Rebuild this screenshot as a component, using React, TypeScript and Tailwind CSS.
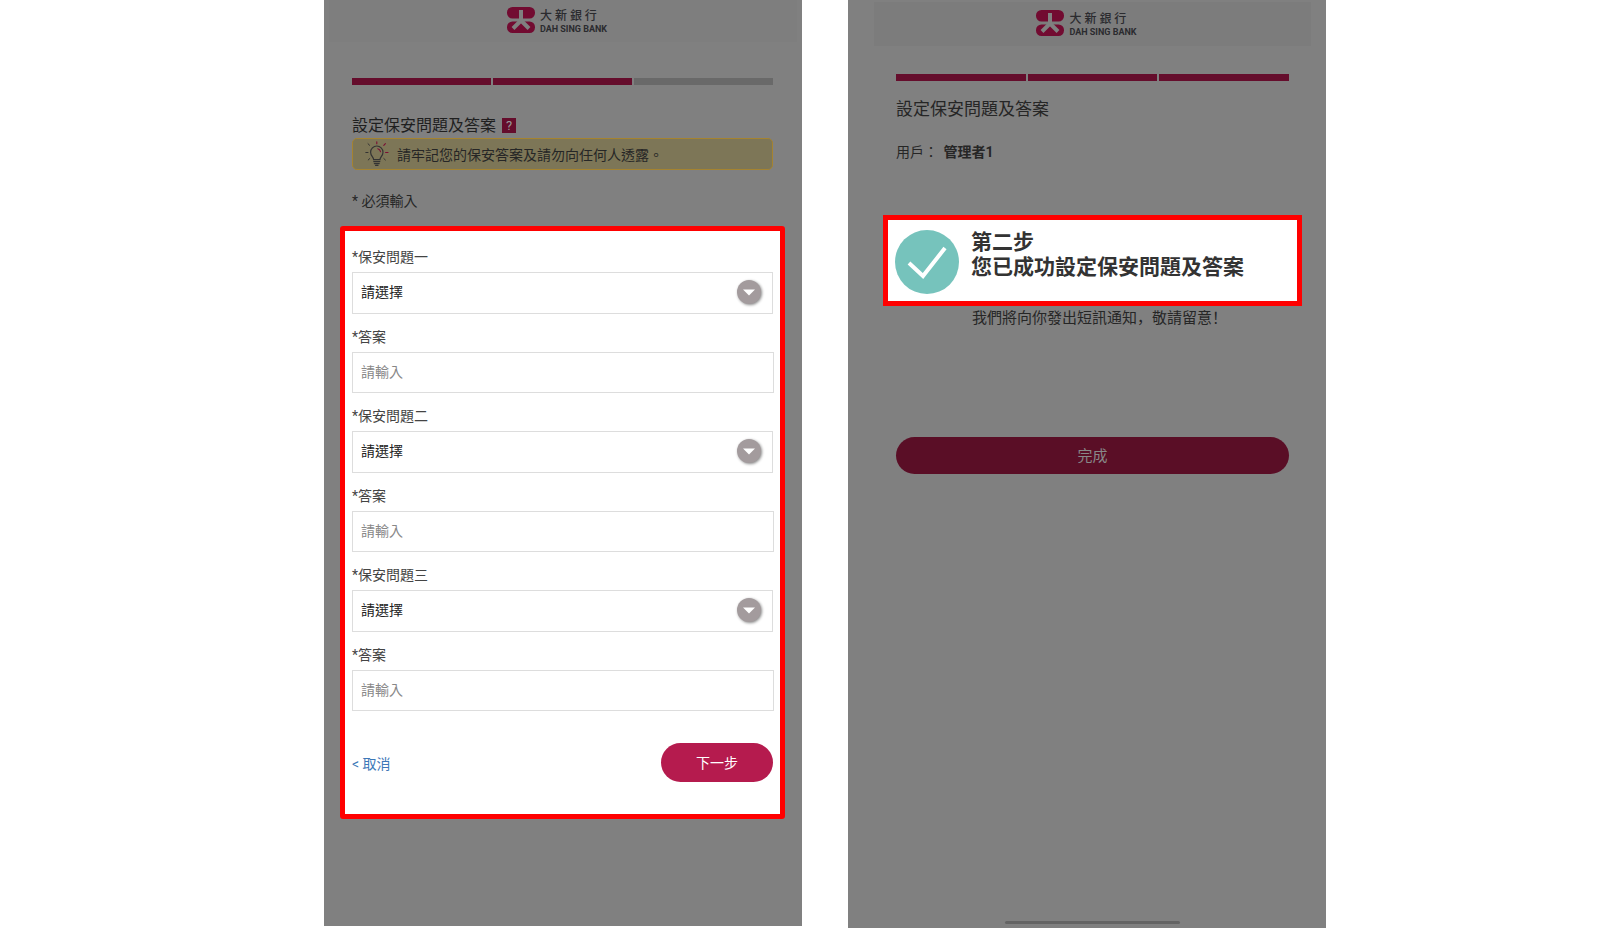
import { useId } from "react";
import clsx from "clsx";

interface QuestionFieldsProps {
  title: string;
}

const Logo = ({ className }: { className?: string }) => (
  <div className={clsx("flex gap-[5px]", className)}>
    <svg viewBox="0 0 28 26" className="mt-px h-[26px] w-7" fill="none">
      <rect width="28" height="11.5" rx="5.5" fill="#720b31" />
      <rect y="14.5" width="28" height="11.5" rx="5.5" fill="#720b31" />
      <path d="M14 3v11M14.500 13l-8.500 8.500M13.500 13l8.500 8.500" stroke="#808080" strokeWidth="4" />
    </svg>
    <div className="pt-px text-[#2b2b2f]">
      <p className="pt-px text-[12px] leading-[17px] font-medium">大 新 銀 行</p>
      <p className="text-[9px] leading-[8px] font-bold">DAH SING BANK</p>
    </div>
  </div>
);

const Progress = ({ done }: { done: number }) => (
  <div className="flex gap-[2px]">
    {[1, 2, 3].map((step) => (
      <div
        key={step}
        className={clsx("h-[7px] flex-1", step <= done ? "bg-[#650d2c]" : "bg-[#696969]")}
      />
    ))}
  </div>
);

const BulbIcon = () => (
  <svg viewBox="0 0 24 26" className="h-[26px] w-6" fill="none" strokeLinecap="round">
    <path
      d="M8.6 18.6c0-2.6-3-3.6-3-7.4a6.2 6.2 0 0 1 12.4 0c0 3.8-3 4.8-3 7.4z"
      stroke="#333"
      strokeWidth="1.2"
    />
    <path d="M8.8 20.6h6M9.4 22.6h4.8M10.6 24.3h2.4" stroke="#333" strokeWidth="1.3" />
    <path d="M4.6 4.3L3 2.7M3 11.5H.8M4.8 17.5l-1.6 1.5M18.8 17.5l1.6 1.5" stroke="#333" />
    <path
      d="M11.8 2.8V.8M18.8 4.3l1.6-1.6M20.6 11.5h2.4M12.8 7.7c1.6.4 2.5 1.4 2.7 3"
      stroke="#7b0c34"
      strokeWidth="1.1"
    />
  </svg>
);

const QuestionFields = ({ title }: QuestionFieldsProps) => {
  const id = useId();

  return (
    <>
      <label htmlFor={`${id}-question`} className="block h-[38px] pt-2 leading-[30px] text-[#444]">
        *{title}
      </label>
      <div className="relative mr-px">
        <select
          id={`${id}-question`}
          className="block h-[42px] w-full appearance-none border border-[#ddd] bg-white px-2 pb-px text-[#222]"
        >
          <option>請選擇</option>
        </select>
        <svg
          viewBox="0 0 24 24"
          className="pointer-events-none absolute top-2 right-3 size-6 rounded-full bg-[#a39b9d] shadow-[1px_1px_3px_#888]"
        >
          <path d="M6 9.5h12l-6 6z" fill="#fff" />
        </svg>
      </div>
      <label htmlFor={`${id}-answer`} className="block h-[38px] pt-2 leading-[30px] text-[#444]">
        *答案
      </label>
      <input
        id={`${id}-answer`}
        type="text"
        placeholder="請輸入"
        className="block h-[41px] w-full border border-[#ddd] bg-white px-2 pb-px placeholder:text-[#888]"
      />
    </>
  );
};

const SetupScreen = () => (
  <section className="mb-0.5 max-w-[478px] flex-1 bg-[#808080] text-[#262626]">
    <header className="mx-[5px] flex h-[42px] justify-center bg-[#7e7e7e] pt-1.5 pr-3">
      <Logo />
    </header>
    <div className="pt-9 pr-[29px] pl-7">
      <Progress done={2} />
      <div className="mt-7 flex h-[25px] items-center gap-1.5 text-[#1f1f1f]">
        <h1 className="text-[16px]">設定保安問題及答案</h1>
        <button
          type="button"
          aria-label="說明"
          className="h-[15px] w-3.5 bg-[#650d2c] text-[13px] leading-[15px] text-[#999]"
        >
          ?
        </button>
      </div>
      <div className="flex h-8 items-center gap-2 rounded-[5px] border border-[#a5832f] bg-[#7d7657] pl-3">
        <BulbIcon />
        <p className="pt-0.5">請牢記您的保安答案及請勿向任何人透露。</p>
      </div>
      <p className="mt-5 leading-[22px]">* 必須輸入</p>
    </div>
    <form className="mt-3.5 mr-[17px] ml-4 rounded-[3px] border-5 border-[#f00] bg-white pt-[3px] pr-1.5 pb-8 pl-[7px]">
      <QuestionFields title="保安問題一" />
      <QuestionFields title="保安問題二" />
      <QuestionFields title="保安問題三" />
      <div className="mt-8 mr-px flex items-center justify-between">
        <a href="#" className="pt-1 text-[#3d78b8]">
          &lt; 取消
        </a>
        <button type="button" className="h-[39px] w-28 rounded-full bg-[#b51b4e] pt-0.5 text-white">
          下一步
        </button>
      </div>
    </form>
  </section>
);

const DoneScreen = () => (
  <section className="flex max-w-[478px] flex-1 flex-col bg-[#808080] text-[#262626]">
    <header className="mt-0.5 mr-[15px] ml-[26px] flex h-11 justify-center bg-[#7c7c7c] pt-[7px]">
      <Logo className="pr-3" />
    </header>
    <div className="pt-7 pr-[37px] pl-12">
      <Progress done={3} />
      <h1 className="mt-[15px] text-[17px] leading-[26px]">設定保安問題及答案</h1>
      <p className="mt-[19px] leading-[22px]">
        用戶： <strong className="ml-0.5">管理者1</strong>
      </p>
    </div>
    <div className="mt-[52px] mr-6 ml-[35px] flex gap-3 border-5 border-[#f00] bg-white pt-2 pb-[7px] pl-[7px]">
      <svg viewBox="0 0 64 64" className="mt-0.5 size-16 shrink-0" fill="none">
        <circle cx="32" cy="32" r="32" fill="#76c3bc" />
        <path d="M14 33l14 13 22-28" stroke="#fff" strokeWidth="4" />
      </svg>
      <h2 className="mt-0.5 text-[21px] leading-[25px] font-bold text-[#333]">
        第二步
        <br />
        您已成功設定保安問題及答案
      </h2>
    </div>
    <p
      lang="zh-CN"
      className="pl-[124px] font-['Noto_Sans_CJK_SC',sans-serif] text-[15px] leading-[22px]"
    >
      我們將向你發出短訊通知，敬請留意！
    </p>
    <div className="mt-[109px] pr-[37px] pl-12">
      <button
        type="button"
        className="h-[37px] w-full rounded-full bg-[#5a0e26] pt-0.5 text-[15px] text-[#888]"
      >
        完成
      </button>
    </div>
    <div className="mt-auto mr-[146px] mb-1 h-[3px] w-[175px] self-end rounded-full bg-[#646464]" />
  </section>
);

export default function App() {
  return (
    <main
      lang="zh-HK"
      className="flex min-h-screen justify-center gap-[46px] bg-white pl-[29px] font-['Roboto','Noto_Sans_CJK_TC',sans-serif] text-[14px]"
    >
      <SetupScreen />
      <DoneScreen />
    </main>
  );
}
